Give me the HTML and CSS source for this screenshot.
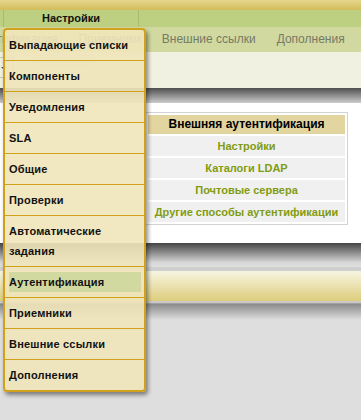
FILE: index.html
```html
<!DOCTYPE html>
<html lang="ru">
<head>
  <meta charset="UTF-8" />
  <title>Настройки</title>
  <link rel="stylesheet" href="styles.css">
</head>
<body>
  <div class="topbar"></div>

  <div class="mainnav">
    <span class="mainnav-item">Настройки</span>
  </div>

  <div class="subnav">
    <span>Аутентификация</span>
    <span>Приемники</span>
    <span>Внешние ссылки</span>
    <span>Дополнения</span>
  </div>

  <div class="filter">
    <span class="filter-select"><span class="arrow"></span></span>
    <span class="filter-input">Иваново</span>
  </div>

  <div class="shade-top"></div>

  <div class="content">
    <div class="auth-box">
      <div class="auth-head">Внешняя аутентификация</div>
      <a class="auth-link" href="#">Настройки</a>
      <a class="auth-link" href="#">Каталоги LDAP</a>
      <a class="auth-link" href="#">Почтовые сервера</a>
      <a class="auth-link" href="#">Другие способы аутентификации</a>
    </div>
  </div>

  <div class="shade-bottom"></div>
  <div class="footer-bar"></div>
  <div class="shade-footer"></div>

  <ul class="dropdown">
    <li><a href="#">Выпадающие списки</a></li>
    <li><a href="#">Компоненты</a></li>
    <li><a href="#">Уведомления</a></li>
    <li><a href="#">SLA</a></li>
    <li><a href="#">Общие</a></li>
    <li><a href="#">Проверки</a></li>
    <li><a href="#">Автоматические задания</a></li>
    <li><a class="active" href="#">Аутентификация</a></li>
    <li><a href="#">Приемники</a></li>
    <li><a href="#">Внешние ссылки</a></li>
    <li><a href="#">Дополнения</a></li>
  </ul>
</body>
</html>
```

FILE: styles.css
```css
html {
  background-color: #dedede;
}

body {
  margin: 0;
  min-height: 420px;
  font-family: "Liberation Sans", Arial, sans-serif;
  background-color: #dedede;
  position: relative;
}

.topbar {
  height: 10px;
  background: linear-gradient(#e4d68c, #d3bd5a);
}

.mainnav {
  height: 17px;
  background-color: #bdcf80;
  display: flex;
  padding-left: 3px;
}

.mainnav-item {
  width: 134px;
  border-left: 1px solid #a9b873;
  border-right: 1px solid #a9b873;
  text-align: center;
  font-size: 11px;
  font-weight: bold;
  line-height: 17px;
  color: #111;
}

.subnav {
  height: 25px;
  background-color: #d1d9a0;
  display: flex;
  gap: 21px;
  margin-left: -36px;
  font-size: 12px;
  line-height: 25px;
  color: #767a66;
  white-space: nowrap;
  overflow: hidden;
}

.filter {
  height: 36px;
  background-color: #f0f1e1;
  display: flex;
  align-items: flex-start;
  gap: 20px;
}

.filter-select {
  width: 13px;
  height: 19px;
  margin-top: 5px;
  border: 1px solid #c9c9b8;
  border-left: none;
  position: relative;
}

.arrow {
  position: absolute;
  left: 1px;
  top: 9px;
  border-left: 3px solid transparent;
  border-right: 3px solid transparent;
  border-top: 3px solid #555;
}

.filter-input {
  margin-top: 3px;
  padding: 0 3px;
  border: 1px solid #e2e2d2;
  font-size: 12px;
  font-weight: bold;
  line-height: 16px;
  color: #d9d9c8;
}

.shade-top {
  height: 15px;
  background: linear-gradient(#4e4e4e, #cdcdcd);
}

.content {
  background-color: #ffffff;
  height: 131px;
  padding: 9px 0 0 145px;
}

.auth-box {
  width: 197px;
  border: 1px solid #d3d3d3;
  padding: 2px;
  display: flex;
  flex-direction: column;
  gap: 2px;
  text-align: center;
}

.auth-head {
  background-color: #e2d5a0;
  font-size: 12px;
  font-weight: bold;
  line-height: 19px;
  color: #000;
}

.auth-link {
  background-color: #f0f0f0;
  font-size: 11px;
  font-weight: bold;
  line-height: 20px;
  color: #819c12;
  text-decoration: none;
}

.shade-bottom {
  height: 28px;
  background: linear-gradient(#444444, #d8d8d8 70%, #dedede 85%, #cfcfcf 86%);
}

.footer-bar {
  height: 30px;
  background: linear-gradient(#f7f5e2, #ddcd7c);
}

.shade-footer {
  height: 19px;
  background: linear-gradient(#c9c9c9 10%, #8a8a8a 15%, #dedede);
}

.dropdown {
  position: absolute;
  left: 3px;
  top: 28px;
  width: 132px;
  margin: 0;
  padding: 0 3px 0 4px;
  list-style: none;
  background-color: rgba(240, 228, 186, 0.9);
  border: 2px solid #d2a11c;
  border-radius: 4px;
  box-shadow: 2px 3px 4px rgba(0, 0, 0, 0.45);
}

.dropdown li {
  padding: 5px 3px 5px 4px;
  margin: 0 -3px 0 -4px;
  border-bottom: 1px solid #d2a11c;
}

.dropdown li:last-child {
  border-bottom: none;
}

.dropdown a {
  display: block;
  font-size: 11px;
  font-weight: bold;
  letter-spacing: 0.2px;
  line-height: 20px;
  color: #111;
  text-decoration: none;
}

.dropdown a.active {
  background-color: #d2d9a0;
}
```
